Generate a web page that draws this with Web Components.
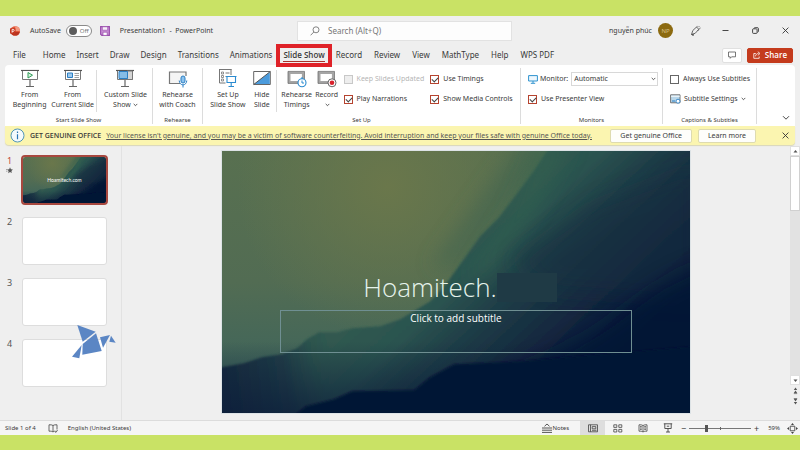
<!DOCTYPE html>
<html lang="en">
<head>
<meta charset="utf-8">
<title>Presentation1 - PowerPoint</title>
<style>
:root{--lime:#c9e265;--chrome:#efefef;--ink:#3a3a3a;--line:#dcdcdc;--accent:#b5432f}
*{box-sizing:border-box}
body{margin:0;background:var(--lime);color:var(--ink);font:7px/10px "Noto Sans","Open Sans",sans-serif}
</style>
</head>
<body>
<app-window>
  <title-bar></title-bar>
  <tab-strip></tab-strip>
  <ribbon-bar></ribbon-bar>
  <license-bar></license-bar>
  <work-area></work-area>
  <status-bar slot="status"></status-bar>
</app-window>
<script>
const base = `<style>
*{box-sizing:border-box}
button,input,select{font:inherit;color:inherit;margin:0;padding:0;border:0;background:none;text-align:inherit}
svg{display:block}
</style>`;
function define(name, html, setup) {
  const t = document.createElement('template');
  t.innerHTML = base + html;
  customElements.define(name, class extends HTMLElement {
    constructor() {
      super();
      this.attachShadow({mode: 'open'}).append(t.content.cloneNode(true));
    }
    connectedCallback() { if (setup) setup(this, this.shadowRoot); }
  });
}

/* name: [width, height, markup] */
const board = '<path d="M0 2.500h18" stroke="#555" stroke-width="1.200"/><path d="M1.500 3v8.500h15V3" fill="#fff" stroke="#777"/><path d="M9 12v6M5 18.500h8" stroke="#666" stroke-width="1.200"/>';
const icons = {
  ppt: [10, 10, '<circle cx="5.200" cy="5" r="4.800" fill="#e2583a"/><path d="M5.200.2a4.800 4.800 0 014.800 4.800h-4.800z" fill="#f39a80"/><path d="M.5 6a4.800 4.800 0 009.300 0z" fill="#b93420"/><rect x="0" y="2.200" width="5.500" height="5.500" rx=".6" fill="#c5371f"/><path d="M2.100 6.700V3.400h1.100a1 1 0 010 2H2.100" stroke="#fff" stroke-width=".8"/>'],
  save: [10, 10, '<path d="M.6.6h8.800v8.800H1.800L.6 8.200z" fill="#c68bd3" stroke="#9a4fac" stroke-width="1.100"/><path d="M2.400.8h5.200v3.400H2.400z" fill="#f7eef9" stroke="#9a4fac" stroke-width=".6"/><path d="M3 6.200h4.200v3.200H3z" fill="#fff" stroke="#9a4fac" stroke-width=".7"/>'],
  search: [10, 10, '<circle cx="6" cy="3.800" r="3" stroke="#666" stroke-width=".8"/><path d="M3.800 6L.6 9.300" stroke="#666" stroke-width=".8"/>'],
  pen: [11, 11, '<path d="M1.500 9.500l1.300-4L6.500 2l2.300 2.300-3.600 4z" stroke="#444" stroke-width=".8"/><path d="M1.500 9.500l2.300-.2M2 10.200h2M6.500 2l1-.6M9.300 1.200l-.8.9M10.500 3l-1.200.5M8.800 4.300l-1 1.600" stroke="#444" stroke-width=".8"/>'],
  min: [7, 7, '<path d="M.5 3.500h6" stroke="#333" stroke-width=".9"/>'],
  restore: [7, 7, '<rect x=".6" y="1.800" width="4.500" height="4.600" rx=".8" stroke="#333" stroke-width=".9"/><path d="M2 1.500Q2.200.5 3.200.5h1.700Q6.500.5 6.500 2v2q0 1-1 1.300" stroke="#333" stroke-width=".8"/>'],
  close: [7, 7, '<path d="M.6.6l5.800 5.800M6.400.6L.6 6.400" stroke="#333" stroke-width=".9"/>'],
  comment: [8, 8, '<path d="M.5 1h7v4.800H3.600L2.200 7.300V5.800H.5z" stroke="#555" stroke-width=".8"/>'],
  share: [8, 8, '<path d="M2.800 2.500H.8v4.800h5.400V5.500M2.500 5.300c.2-1.800 1.300-2.800 3-2.800M4.800.7l2.200 1.800-2.200 1.900" stroke="#fff" stroke-width=".8"/>'],
  play: [18, 20, board + '<path d="M7 4.500l4.500 2.700L7 10z" fill="#d9f2e0" stroke="#2e9b57"/>'],
  current: [18, 20, board + '<path d="M3.500 5h5v4.500h-5z" fill="#9cc8ec" stroke="#2b7fc4"/><path d="M10.500 5.500h4.500M10.500 7.500h4.500M10.500 9.500h4.500" stroke="#8a8a8a" stroke-width=".8"/>'],
  custom: [18, 20, board + '<path d="M11 3h5.500v8.500H11z" fill="#d5d5d5" stroke="#777"/><path d="M3 3.500h8.500v7H3z" fill="#85bce6" stroke="#2b7fc4"/>'],
  coach: [20, 20, '<path d="M12 15.500H1.500V4H18v4" fill="#f4f4f4" stroke="#777" stroke-width="1.200"/><rect x="13" y="8" width="4" height="7" rx="2" fill="#8cc3ee" stroke="#2b7fc4"/><path d="M11.200 12.500c.3 5.800 7.300 5.800 7.600 0M15 17v2.500" stroke="#2b7fc4"/>'],
  setup: [20, 20, '<path d="M1.500 1.500h12M1.500 1v14h6M13 1v6" stroke="#777"/><path d="M3.500 4h2v2h-2zM3.500 7.500h2v2h-2zM3.500 11h2v2h-2z" stroke="#777" stroke-width=".8"/><path d="M7.500 5h4M7.500 8.500h1" stroke="#777"/><path d="M8 8.500h10.500M9 8.500v6h8.500v-6M13.200 14.500v3.500M10.500 18.500h5.500" stroke="#2b8bd0" stroke-width="1.100"/>'],
  hide: [18, 20, '<path d="M.7 3.500h16.600v13H.7z" fill="#fff" stroke="#666"/><path d="M16.800 4v12H1.200z" fill="#4b9bdc"/><path d="M.7 16.500L17.300 3.500" stroke="#555"/>'],
  timings: [20, 20, '<path d="M2.200 4.700h14v9.500h-14z" fill="#fff" stroke="#a5a5a5" stroke-width="2.600"/><path d="M1 3.400h16.500v12H1z" stroke="#555" stroke-width=".6"/><circle cx="15" cy="14.800" r="4" fill="#fff" stroke="#2b8bd0" stroke-width="1.100"/><path d="M15 12.500v2.500h2M14 10h2" stroke="#2b8bd0"/>'],
  record: [20, 20, '<path d="M2.200 4.700h14v9.500h-14z" fill="#fff" stroke="#a5a5a5" stroke-width="2.600"/><path d="M1 3.400h16.500v12H1z" stroke="#555" stroke-width=".6"/><circle cx="15" cy="14.800" r="4" fill="#fff" stroke="#555" stroke-width=".9"/><circle cx="15" cy="14.800" r="2.300" fill="#d8212c"/>'],
  monitor: [10, 9, '<path d="M.6.6h8.800v5.400H.6z" fill="#eef7fd" stroke="#2f93cf"/><path d="M5 6v2M2.800 8.300h4.400" stroke="#2f93cf"/>'],
  subtitle: [11, 10, '<path d="M.6.8h9.400v8H.6z" fill="#b9d7ea" stroke="#666" stroke-width=".9"/><path d="M1 2.200h8.800" stroke="#fff"/><path d="M2 7h3" stroke="#2b7fc4"/><circle cx="8" cy="7.200" r="2" fill="#fff" stroke="#2b7fc4" stroke-width=".9"/>'],
  chev: [5, 4, '<path d="M.7.9l1.800 1.800L4.300.9" stroke="#333" stroke-width=".8"/>'],
  chevbig: [8, 6, '<path d="M1 1.200l3 3 3-3" stroke="#333" stroke-width=".9"/>'],
  info: [15, 15, '<circle cx="7.500" cy="7.500" r="6.500" fill="#f4fafc" stroke="#3e8ab3" stroke-width=".9"/><path d="M7.500 6.300v5M7.500 3.500v1.500" stroke="#2a76b5" stroke-width="1.200"/>'],
  star: [7, 7, '<path d="M4 .3l.9 2 2 .2-1.500 1.400.4 2.200L4 5 2.200 6.200l.4-2.300L1.200 2.500l2-.2z" fill="#555"/><path d="M0 2.500h1.500M0 4.200h1.500" stroke="#777" stroke-width=".6"/>'],
  bird: [44, 34, '<g fill="#5b86c4"><path d="M5.300 0L23.700 6.700 10.700 16.700z"/><path d="M24 8.300L29.700 26 10.300 29.700 10.700 19z"/><path d="M9.700 20L7.300 33.300 0 31.700z"/><path d="M28 12.300L38 10 31 22.700z"/><path d="M39 10.700L43.700 17.700 37.300 16.700z"/></g>'],
  up: [9, 9, '<path d="M2.500 5.500h4l-2-2.500z" fill="#555"/>'],
  down: [9, 9, '<path d="M2.500 3.500h4l-2 2.500z" fill="#555"/>'],
  dup: [9, 9, '<path d="M2.800 4h3.400L4.500 1.500zM2.800 7h3.400L4.500 4.500z" fill="#555"/><path d="M2.800 7.600h3.400" stroke="#555" stroke-width=".7"/>'],
  ddown: [9, 9, '<path d="M2.800 2h3.400L4.500 4.500zM2.800 5h3.400L4.500 7.500z" fill="#555"/><path d="M2.800 1.500h3.400" stroke="#555" stroke-width=".7"/>'],
  book: [10, 9, '<path d="M5 1.500C4 .8 2.800.7 1 .8v6.400c1.800-.1 3 0 4 .8 1-.8 1.500-.8 2.500-.8M5 1.500C6 .8 7.200.7 9 .8v4.700M5 1.500V8M7 7.500l1 .9L9.500 6" stroke="#444" stroke-width=".8"/>'],
  notes: [10, 10, '<path d="M0 5h10M0 7.200h10M0 9.400h10M2.500 3.300L5 1l2.500 2.300" stroke="#444" stroke-width=".9"/>'],
  normal: [10, 9, '<path d="M.5.800h9v7h-9zM2.500.8v7" stroke="#444" stroke-width=".8"/><path d="M4.200 2.600h3.600v2.200H4.200zM4 6.300h4.500" stroke="#444" stroke-width=".8"/>'],
  sorter: [10, 9, '<path d="M.8.8h3v2.600h-3zM5.800.8h3v2.600h-3zM.8 5.400h3V8h-3zM5.800 5.400h3V8h-3z" stroke="#444" stroke-width=".8"/>'],
  read: [10, 9, '<path d="M5 1.500C4 .8 2.500.7 1 .8v6.400c1.500-.1 3 0 4 .8 1-.8 2.500-.9 4-.8V.8C7.500.7 6 .8 5 1.500zM5 1.500V8M2 2.600h1.800M2 4h1.800M2 5.400h1.800M6.200 2.600H8M6.200 4H8M6.200 5.400H8" stroke="#444" stroke-width=".8"/>'],
  show: [10, 10, '<path d="M.8.800h8.400M1.800.8v4.700h6.400V.8M5 5.500V9M3 9h4M3.800 3.200h2.400" stroke="#444" stroke-width=".9"/>'],
  fit: [11, 11, '<path d="M3.200 3.200h4.600v4.600H3.200z" stroke="#444" stroke-width=".9"/><path d="M5.500 0L7 2H4zM5.500 11L4 9h3zM0 5.500L2 4v3zM11 5.500L9 7V4z" fill="#444"/>']
};
define('ui-icon', '', (el, root) => {
  const [w, h, body] = icons[el.getAttribute('name')];
  root.innerHTML = `<style>:host{display:block;flex:none}svg{display:block}</style><svg width="${w}" height="${h}" viewBox="0 0 ${w} ${h}" fill="none" aria-hidden="true">${body}</svg>`;
});

define('app-window', `<style>
:host{display:flex;flex-direction:column;min-height:100vh;padding:16px 0;}
main{flex:1;display:flex;flex-direction:column;background:var(--chrome);min-height:0}
</style><main><slot></slot><slot name="status"></slot></main>`);

define('title-bar', `<style>
:host{display:grid;grid-template-columns:297fr 215fr 288fr;align-items:center;height:29px}
div{display:flex;align-items:center}
.l{padding-left:10px}.l ui-icon{margin-right:10px}
.toggle{appearance:none;width:26px;height:12px;border:1px solid #8a8a8a;border-radius:6px;background:#fff}
label.sw{display:grid;align-items:center;margin:0 8px 0 5px}
label.sw>*{grid-area:1/1}
label.sw input::before{content:"";display:block;width:8px;height:8px;margin:1px 2px;border-radius:50%;background:#5c5c5c}
label.sw span{z-index:1;padding-left:14px;color:#777;font-size:6px}
.s{height:20px;background:#fdfdfd;border:1px solid #e2e2e2;padding-left:12px;gap:8px}
.s input{flex:1;min-width:0;font-size:8px;height:18px;outline:0}
.s input::placeholder{color:#777;opacity:1}
.r{justify-content:flex-end;padding-right:11px}
.av{width:15px;height:15px;border-radius:50%;background:#8c6a10;color:#d9c088;font-size:6px;justify-content:center;margin:0 17px 0 6px}
.r button{margin-left:23px}.r button.first{margin-left:0;margin-right:-2px}
</style>
<div class="l"><ui-icon name="ppt"></ui-icon><span>AutoSave</span>
<label class="sw"><input class="toggle" type="checkbox" role="switch" aria-label="AutoSave"><span>Off</span></label>
<button aria-label="Save"><ui-icon name="save"></ui-icon></button><span>Presentation1&nbsp; -&nbsp; PowerPoint</span></div>
<div class="s"><ui-icon name="search"></ui-icon><input type="text" placeholder="Search (Alt+Q)" aria-label="Search"></div>
<div class="r"><span>nguyễn phúc</span><div class="av">NP</div>
<button class="first" aria-label="Coming soon"><ui-icon name="pen"></ui-icon></button>
<button aria-label="Minimize"><ui-icon name="min"></ui-icon></button>
<button aria-label="Restore"><ui-icon name="restore"></ui-icon></button>
<button aria-label="Close"><ui-icon name="close"></ui-icon></button></div>`);

define('tab-strip', `<style>
:host{display:flex;align-items:center;height:20px;padding:0 7px 0 13px;font-size:8px}
nav{display:flex;gap:11px;flex:1}
a{color:inherit;text-decoration:none;line-height:12px;white-space:nowrap}
a:first-child{margin-right:6px}
a.on~a{margin-left:1px}
a.on{position:relative;font-family:"Open Sans",sans-serif;font-weight:600;border-bottom:1px solid #a8332a;margin-bottom:-1px;margin-right:-1px}
a.on::after{content:"";position:absolute;inset:-5px -7px -6px;border:4px solid #df2228}
button{height:15px;border-radius:2px;display:flex;align-items:center;gap:4px;background:#fff;border:1px solid #e0e0e0;padding:0 5px;margin-right:5px}
button.share{background:#c43b1d;border-color:#c43b1d;color:#fff;font:600 8px/12px "Open Sans",sans-serif;margin:0}
</style><nav></nav><button aria-label="Comments"><ui-icon name="comment"></ui-icon></button>
<button class="share"><ui-icon name="share"></ui-icon>Share</button>`, (el, root) => {
  root.querySelector('nav').innerHTML = ['File','Home','Insert','Draw','Design','Transitions','Animations','Slide Show','Record','Review','View','MathType','Help','WPS PDF']
    .map(t => `<a href="#"${t === 'Slide Show' ? ' class="on" aria-current="page"' : ''}>${t}</a>`).join('');
});

define('ribbon-button', `<style>
:host{display:block}
button{width:100%;display:flex;flex-direction:column;align-items:center;text-align:center;white-space:nowrap}
span{display:block;margin-top:2px;line-height:10px}
</style><button><span><slot></slot></span></button>`, (el, root) => {
  root.querySelector('span').insertAdjacentHTML('beforebegin', `<ui-icon name="${el.getAttribute('icon')}"></ui-icon>`);
});

define('check-option', `<style>
:host{display:block}
label{display:flex;align-items:center;gap:4px;white-space:nowrap;height:10px}
input{appearance:none;width:9px;height:9px;border:1px solid #666;background:#fff;flex:none}
input:checked{border-color:var(--accent)}
input:checked::before{content:"";display:block;width:5px;height:3px;margin:1px;border:solid #444;border-width:0 0 1px 1px;transform:rotate(-45deg)}
:host([disabled]) label{color:#b5b5b5}
:host([disabled]) input{border-color:#c8c8c8;background:#eee}
</style><label><input type="checkbox"><span><slot></slot></span></label>`, (el, root) => {
  const i = root.querySelector('input');
  i.checked = el.hasAttribute('checked');
  i.disabled = el.hasAttribute('disabled');
});

define('ribbon-group', `<style>
:host{display:flex;flex-direction:column;margin:3px 0 2px;border-right:1px solid var(--line)}
.c{flex:1;display:grid;grid-template-columns:var(--cols,1fr)}
.n{font-size:6px;line-height:8px;text-align:center;min-height:8px}
</style><div class="c"><slot></slot></div><div class="n"></div>`, (el, root) => {
  root.querySelector('.n').textContent = el.getAttribute('label');
});

define('ribbon-bar', `<style>
:host{display:grid;grid-template-columns:148fr 50fr 318fr 142fr 94fr 38fr;height:61px;margin:0 5px;background:#fff;border-radius:4px 4px 0 0}
.chev{display:inline-block;vertical-align:middle;margin-left:2px}
.g1{--cols:3px 44fr 42fr 5px 54fr}
.g3{--cols:3px 44fr 24fr 7px 32fr 28fr 3px 87fr 90fr}
.sep{border-left:1px solid var(--line);margin:2px 0 4px 2px}
.stack{display:flex;flex-direction:column;gap:10px;padding-top:6px}
.g4 .stack,.g5 .stack{padding-left:7px}
.row{display:flex;align-items:center;gap:2px;height:10px;white-space:nowrap}
.sel{flex:1;display:grid;align-items:center;margin:0 4px 0 1px}
.sel>*{grid-area:1/1}
.sel ui-icon{justify-self:end;margin-right:2px}
select{appearance:none;height:14px;border:1px solid #d8d8d8;padding:0 2px;width:100%;background:#fff}
.last{display:flex;align-items:flex-end;justify-content:flex-end;padding:0 5px 5px 0}
.row button{display:flex;align-items:center;gap:3px}
</style>
<ribbon-group class="g1" label="Start Slide Show"><i></i><ribbon-button icon="play">From<br>Beginning</ribbon-button><ribbon-button icon="current">From<br>Current Slide</ribbon-button><i class="sep"></i><ribbon-button icon="custom">Custom Slide<br>Show<ui-icon class="chev" name="chev"></ui-icon></ribbon-button></ribbon-group>
<ribbon-group label="Rehearse"><ribbon-button icon="coach">Rehearse<br>with Coach</ribbon-button></ribbon-group>
<ribbon-group class="g3" label="Set Up"><i></i><ribbon-button icon="setup">Set Up<br>Slide Show</ribbon-button><ribbon-button icon="hide">Hide<br>Slide</ribbon-button><i class="sep"></i><ribbon-button icon="timings">Rehearse<br>Timings</ribbon-button><ribbon-button icon="record">Record<br><ui-icon class="chev" name="chev"></ui-icon></ribbon-button><i></i>
<div class="stack"><check-option disabled>Keep Slides Updated</check-option><check-option checked>Play Narrations</check-option></div>
<div class="stack"><check-option checked>Use Timings</check-option><check-option checked>Show Media Controls</check-option></div></ribbon-group>
<ribbon-group class="g4" label="Monitors"><div class="stack"><div class="row"><ui-icon name="monitor"></ui-icon><label for="mon">Monitor:</label><div class="sel"><select id="mon"><option>Automatic</option></select><ui-icon name="chev"></ui-icon></div></div><check-option checked>Use Presenter View</check-option></div></ribbon-group>
<ribbon-group class="g5" label="Captions &amp; Subtitles"><div class="stack"><check-option>Always Use Subtitles</check-option><div class="row"><button><ui-icon name="subtitle"></ui-icon>Subtitle Settings<ui-icon name="chev"></ui-icon></button></div></div></ribbon-group>
<div class="last"><button aria-label="Collapse ribbon"><ui-icon name="chevbig"></ui-icon></button></div>`);

define('license-bar', `<style>
:host{display:flex;align-items:center;height:19px;margin:0 5px;padding:0 6px 0 5px;background:#fbf5b0;border-radius:0 0 4px 4px;box-shadow:0 1px 1px #d9d6b8;white-space:nowrap}
b{font:600 7px/10px "Open Sans",sans-serif;margin:0 5px 0 5px}
a{color:#555;text-underline-offset:1px}
.sp{flex:1}
button{line-height:10px;white-space:nowrap}
.bt{height:14px;background:#fefefb;border:1px solid #dedbb0;border-radius:2px;padding:0 9px;margin-right:6px}
.x{margin-left:20px;display:grid}
</style><ui-icon name="info"></ui-icon><b>GET GENUINE OFFICE</b><a href="#">Your license isn't genuine, and you may be a victim of software counterfeiting. Avoid interruption and keep your files safe with genuine Office today.</a><span class="sp"></span>
<button class="bt">Get genuine Office</button><button class="bt">Learn more</button><button class="x" aria-label="Dismiss"><ui-icon name="close"></ui-icon></button>`);

define('slide-art', `<style>:host{display:block}svg{width:100%;height:100%}</style>
<svg viewBox="0 0 467 262" preserveAspectRatio="none" aria-hidden="true">
<defs>
<linearGradient id="a" x1="0" y1="0" x2="0" y2="1"><stop offset="0" stop-color="#587050"/><stop offset=".5" stop-color="#526c53"/><stop offset=".8" stop-color="#42665a"/></linearGradient>
<radialGradient id="b" gradientUnits="userSpaceOnUse" cx="165" cy="35" r="150"><stop offset="0" stop-color="#6a774b"/><stop offset="1" stop-color="#6a774b" stop-opacity="0"/></radialGradient>
<linearGradient id="c" gradientUnits="userSpaceOnUse" x1="230" y1="80" x2="380" y2="240"><stop offset="0" stop-color="#30594f"/><stop offset=".2" stop-color="#2b5350"/><stop offset=".4" stop-color="#1e3c46"/><stop offset=".65" stop-color="#13273f"/><stop offset="1" stop-color="#071537"/></linearGradient>
<linearGradient id="d" gradientUnits="userSpaceOnUse" x1="0" y1="215" x2="110" y2="200"><stop offset="0" stop-color="#172b3f"/><stop offset=".55" stop-color="#1f3b46" stop-opacity=".9"/><stop offset="1" stop-color="#2c5451" stop-opacity="0"/></linearGradient>
<linearGradient id="e" gradientUnits="userSpaceOnUse" x1="0" y1="190" x2="0" y2="262"><stop offset="0" stop-color="#0b1c3a" stop-opacity="0"/><stop offset="1" stop-color="#0b1c3a" stop-opacity=".7"/></linearGradient>
<filter id="f" x="-20%" y="-20%" width="140%" height="140%"><feGaussianBlur stdDeviation="10"/></filter>
<filter id="g" x="-20%" y="-20%" width="140%" height="140%"><feGaussianBlur stdDeviation="1"/></filter>
</defs>
<rect width="467" height="262" fill="url(#a)"/><rect width="467" height="262" fill="url(#b)"/>
<path d="M235 115L275 68 340-10H300L210 115z" fill="#3f6450" opacity=".6" filter="url(#f)"/>
<g filter="url(#g)"><path d="M328-5L310 22 277 66 258 85 240 110 222 135 208 150 178 168 158 175 130 177 115 181 97 181 85 188 75 197 60 203 40 206 22 212-5 217V270H475V-5z" fill="url(#c)"/>
<path d="M97 181L85 188 75 197 60 203 40 206 22 212-5 217V270H130L160 205z" fill="url(#d)"/></g>
<path d="M350-10L310 60 265 125 245 130 290 60 320-10z" fill="#35644f" opacity=".6" filter="url(#f)"/>
<path d="M370 55L475 15V150L330 140 290 110z" fill="#182f41" opacity=".5" filter="url(#f)"/>
<rect y="190" width="467" height="72" fill="url(#e)"/>
<path d="M280 222Q350 200 400 160T490 110V280H200z" fill="#051235" opacity=".8" filter="url(#f)"/>
<path d="M70 266L84 255 112 248 130 240 192 239 208 226 232 213 300 210 475 195V270H70z" fill="#051234" filter="url(#g)"/>
</svg>`);

define('slide-thumb', `<style>
:host{display:grid;grid-template-columns:22px 85fr 14px;height:48px}
.n{font-size:9px;line-height:10px;color:#555;padding-left:7px}
.n ui-icon{margin:1px 0 0 -1px}
button{display:grid;border:1px solid #ddd;border-radius:3px;background:#fff;overflow:hidden;text-align:center;align-items:center}
button>*{grid-area:1/1}
slide-art{width:100%;height:100%}
span{font:5px/8px Lato,sans-serif;color:#fff;z-index:1}
:host([on]) .n{color:#c24a38}
:host([on]) button{border-color:#eee;outline:2px solid #a8483f;outline-offset:-1px}
</style><div class="n"></div><button></button>`, (el, root) => {
  const n = el.getAttribute('n'), on = el.hasAttribute('on');
  root.querySelector('.n').innerHTML = n + (on ? '<ui-icon name="star"></ui-icon>' : '');
  const b = root.querySelector('button');
  b.setAttribute('aria-label', 'Slide ' + n);
  if (on) b.innerHTML = '<slide-art></slide-art><span>Hoamitech.com</span>';
});

define('slide-panel', `<style>
:host{display:flex;flex-direction:column;gap:13px;padding-top:10px;border-right:1px solid #e2e2e2;position:relative}
.bird{position:absolute;left:72px;top:179px}
</style><slide-thumb n="1" on></slide-thumb><slide-thumb n="2"></slide-thumb><slide-thumb n="3"></slide-thumb><slide-thumb n="4"></slide-thumb><ui-icon class="bird" name="bird"></ui-icon>`);

define('slide-canvas', `<style>
:host{display:block;padding:5px 15% 7px}
.slide{display:grid;aspect-ratio:467/262;box-shadow:0 0 0 1px #dde3e6;color:#fff;overflow:hidden}
.slide>*{grid-area:1/1}
slide-art{width:100%;height:100%;min-height:0}
.t{z-index:1;font-family:"Open Sans",sans-serif;padding:26% 12% 0}
h1{margin:0 2px 8px;font-weight:300;font-size:26px;line-height:29px;display:flex;justify-content:center;padding-left:8px;color:#e6f3ec}
i{width:60px;background:#1f3a45}
p{margin:0 2px;height:43px;border:1px solid #6f8f92;text-align:center;font-size:10px;line-height:14px}
</style><div class="slide"><slide-art></slide-art><div class="t"><h1>Hoamitech.<i></i></h1><p>Click to add subtitle</p></div></div>`);

define('scroll-rail', `<style>
:host{display:flex;flex-direction:column;background:var(--chrome)}
button{background:#fff;border:1px solid #e0e0e0;height:10px;display:grid;place-items:center}
.track{flex:1;background:#e2e2e2}
.th{height:55px;background:#fff;border:1px solid #d0d0d0}
.p{background:none;border:0;height:11px}
footer{height:13px}
</style><button aria-label="Scroll up"><ui-icon name="up"></ui-icon></button><div class="track"><div class="th"></div></div>
<button aria-label="Scroll down"><ui-icon name="down"></ui-icon></button>
<button class="p" aria-label="Previous slide"><ui-icon name="dup"></ui-icon></button><button class="p" aria-label="Next slide"><ui-icon name="ddown"></ui-icon></button><footer></footer>`);

define('work-area', `<style>
:host{flex:1;display:grid;grid-template-columns:122px 1fr 10px;padding-top:1px;border-bottom:1px solid var(--line)}
</style><slide-panel></slide-panel><slide-canvas></slide-canvas><scroll-rail></scroll-rail>`);

define('status-bar', `<style>
:host{display:flex;align-items:center;height:14px;padding:0 2px 0 5px;background:#f5f5f5;font-size:6px;white-space:nowrap}
.sp{flex:1}
button{display:flex;align-items:center;gap:1px;height:14px}
.v{width:25px;justify-content:center}
.on{background:#dedede}
.z{font-size:9px;width:7px;justify-content:center;line-height:9px}
.sl{position:relative;display:grid;align-items:center;margin:0 2px}
.sl::after{content:"";position:absolute;left:50%;top:calc(50% - 1px);width:1px;height:3px;background:#666}
input{appearance:none;width:62px;height:8px;background:linear-gradient(#777,#777) center/100% 1px no-repeat}
input::-webkit-slider-thumb{appearance:none;width:3px;height:7px;background:#555}
.spell{margin:0 10px 0 12px}
.notes{margin-right:11px}
.pct{margin:0 7px 0 8px}
</style><span>Slide 1 of 4</span><button class="spell" aria-label="Spelling"><ui-icon name="book"></ui-icon></button><span>English (United States)</span><span class="sp"></span>
<button class="notes"><ui-icon name="notes"></ui-icon>Notes</button>
<button class="v on" aria-label="Normal"><ui-icon name="normal"></ui-icon></button>
<button class="v" aria-label="Slide sorter"><ui-icon name="sorter"></ui-icon></button>
<button class="v" aria-label="Reading view"><ui-icon name="read"></ui-icon></button>
<button class="v" aria-label="Slide show"><ui-icon name="show"></ui-icon></button>
<button class="z" aria-label="Zoom out">−</button><div class="sl"><input type="range" min="0" max="100" value="27" aria-label="Zoom"></div><button class="z" aria-label="Zoom in">+</button>
<span class="pct">59%</span><button aria-label="Fit to window"><ui-icon name="fit"></ui-icon></button>`);
</script>
</body>
</html>
